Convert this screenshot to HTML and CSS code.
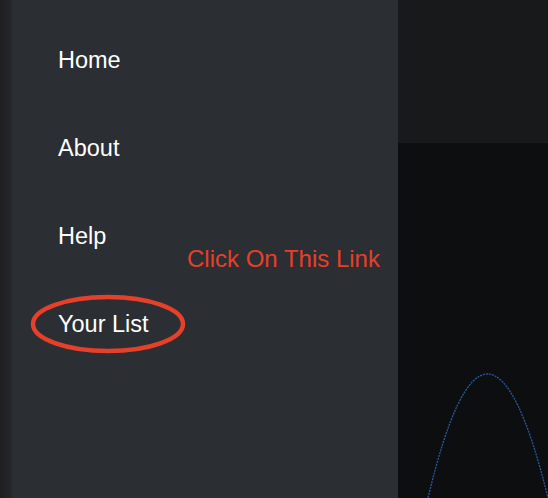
FILE: index.html
```html
<!DOCTYPE html>
<html>
<head>
<meta charset="utf-8">
<link rel="stylesheet" href="styles.css">
</head>
<body>
<div class="app">
  <div class="edge"></div>
  <aside class="sidebar">
    <nav class="nav">
      <a class="nav-item">Home</a>
      <a class="nav-item">About</a>
      <a class="nav-item">Help</a>
      <a class="nav-item">Your List</a>
    </nav>
    <div class="callout">Click On This Link</div>
    <svg class="ring" width="160" height="64" viewBox="0 0 160 64">
      <ellipse cx="79" cy="31" rx="75" ry="27" fill="none" stroke="#e5402a" stroke-width="4.5"/>
    </svg>
  </aside>
  <main class="content">
    <div class="topbar"></div>
    <div class="stage">
      <svg class="arc" width="150" height="355" viewBox="398 143 150 355">
        <path d="M 428 498 Q 487 250 548 498" fill="none" stroke="#285ba0" stroke-width="1.3" stroke-dasharray="2 1"/>
      </svg>
    </div>
  </main>
</div>
</body>
</html>
```
FILE: styles.css
```css
html, body {
  margin: 0;
  padding: 0;
  height: 100%;
  background: #0d0e10;
}
.app {
  display: flex;
  width: 548px;
  height: 498px;
  overflow: hidden;
  font-family: "Liberation Sans", Arial, sans-serif;
}
.edge {
  width: 12px;
  flex: none;
  background: linear-gradient(to right, #1f1f21, #232325 60%, #27282b);
}
.sidebar {
  position: relative;
  width: 386px;
  flex: none;
  background: #2b2e32;
}
.nav {
  display: flex;
  flex-direction: column;
  padding-top: 16px;
  padding-left: 46px;
}
.nav-item {
  color: #ffffff;
  font-size: 23.5px;
  line-height: 88px;
  height: 88px;
}
.callout {
  position: absolute;
  left: 175px;
  top: 245px;
  color: #e5402a;
  font-size: 24px;
  line-height: 28px;
}
.ring {
  position: absolute;
  left: 17px;
  top: 293px;
}
.content {
  flex: 1;
  display: flex;
  flex-direction: column;
}
.topbar {
  height: 143px;
  flex: none;
  background: #18191b;
}
.stage {
  flex: 1;
  background: #0d0e10;
}
.arc {
  display: block;
}
```
